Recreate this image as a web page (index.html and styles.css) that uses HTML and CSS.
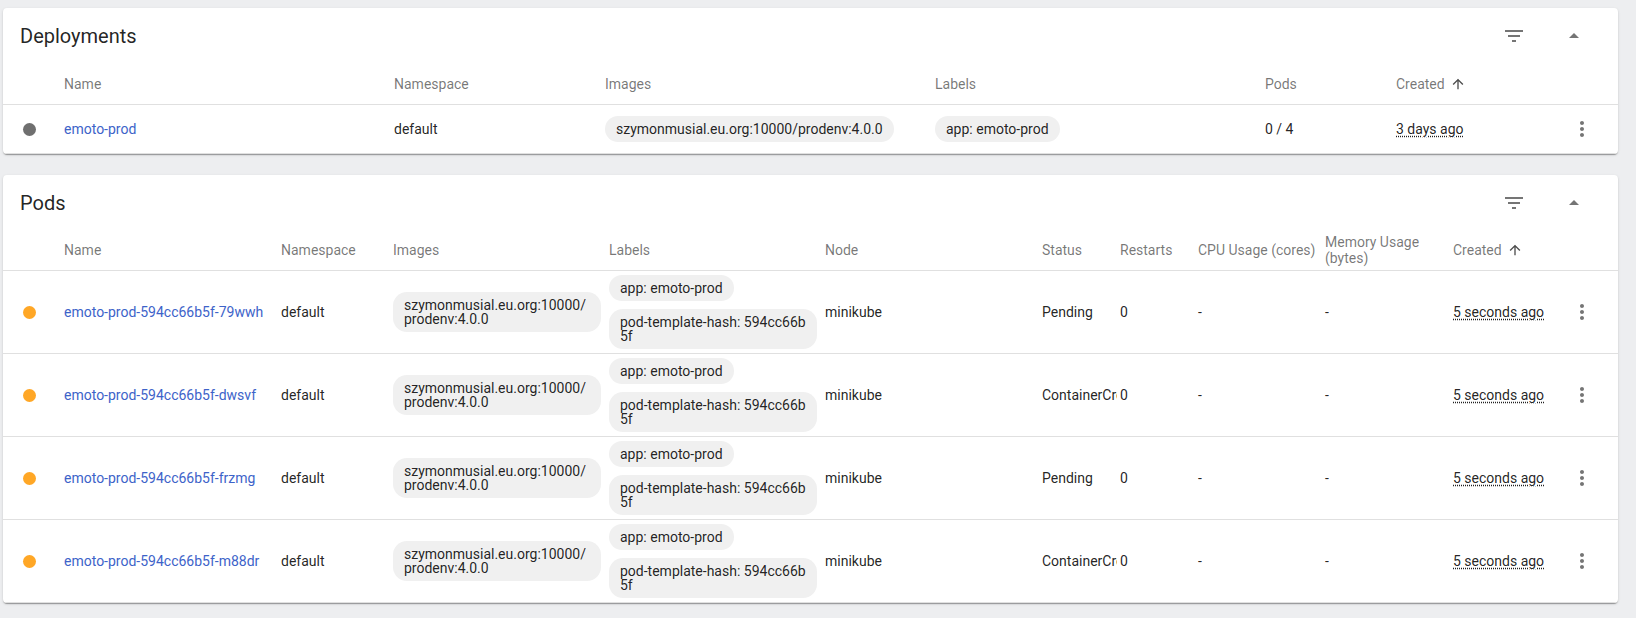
FILE: index.html
```html
<!DOCTYPE html>
<html lang="en">
<head>
<meta charset="utf-8">
<title>Workloads</title>
<link rel="stylesheet" href="styles.css">
</head>
<body>
<div class="page">

  <section class="card">
    <header class="card-header">
      <h2 class="card-title">Deployments</h2>
      <button class="icon-btn" aria-label="Filter"><svg viewBox="0 0 24 24" width="24" height="24"><path d="M10 18h4v-2h-4v2zM3 6v2h18V6H3zm3 7h12v-2H6v2z"/></svg></button>
      <button class="icon-btn" aria-label="Collapse"><svg viewBox="0 0 24 24" width="24" height="24"><path d="M7 14l5-5 5 5z"/></svg></button>
    </header>
    <table class="grid">
      <colgroup>
        <col class="c-dot"><col class="d-name"><col class="d-ns"><col class="d-img"><col class="d-lbl"><col class="d-pods"><col class="d-created"><col class="c-act">
      </colgroup>
      <thead>
        <tr><th></th><th>Name</th><th>Namespace</th><th>Images</th><th>Labels</th><th>Pods</th><th><span class="sorted">Created<svg viewBox="0 0 24 24" width="16" height="16"><path d="M4 12l1.41 1.41L11 7.83V20h2V7.83l5.58 5.59L20 12l-8-8-8 8z"/></svg></span></th><th></th></tr>
      </thead>
      <tbody>
        <tr class="row-single">
          <td class="dot-cell"><span class="dot dot-grey"></span></td>
          <td><a class="link" href="#">emoto-prod</a></td>
          <td>default</td>
          <td><span class="chip">szymonmusial.eu.org:10000/prodenv:4.0.0</span></td>
          <td><span class="chip">app: emoto-prod</span></td>
          <td>0 / 4</td>
          <td><span class="age">3 days ago</span></td>
          <td class="act"><svg class="kebab" viewBox="0 0 24 24" width="24" height="24"><path d="M12 8c1.1 0 2-.9 2-2s-.9-2-2-2-2 .9-2 2 .9 2 2 2zm0 2c-1.1 0-2 .9-2 2s.9 2 2 2 2-.9 2-2-.9-2-2-2zm0 6c-1.1 0-2 .9-2 2s.9 2 2 2 2-.9 2-2-.9-2-2-2z"/></svg></td>
        </tr>
      </tbody>
    </table>
  </section>

  <section class="card">
    <header class="card-header">
      <h2 class="card-title">Pods</h2>
      <button class="icon-btn" aria-label="Filter"><svg viewBox="0 0 24 24" width="24" height="24"><path d="M10 18h4v-2h-4v2zM3 6v2h18V6H3zm3 7h12v-2H6v2z"/></svg></button>
      <button class="icon-btn" aria-label="Collapse"><svg viewBox="0 0 24 24" width="24" height="24"><path d="M7 14l5-5 5 5z"/></svg></button>
    </header>
    <table class="grid">
      <colgroup>
        <col class="c-dot"><col class="p-name"><col class="p-ns"><col class="p-img"><col class="p-lbl"><col class="p-node"><col class="p-status"><col class="p-restarts"><col class="p-cpu"><col class="p-mem"><col class="p-created"><col class="c-act">
      </colgroup>
      <thead>
        <tr><th></th><th>Name</th><th>Namespace</th><th>Images</th><th>Labels</th><th>Node</th><th>Status</th><th>Restarts</th><th>CPU Usage (cores)</th><th class="wrap">Memory Usage (bytes)</th><th><span class="sorted">Created<svg viewBox="0 0 24 24" width="16" height="16"><path d="M4 12l1.41 1.41L11 7.83V20h2V7.83l5.58 5.59L20 12l-8-8-8 8z"/></svg></span></th><th></th></tr>
      </thead>
      <tbody>
        <tr>
          <td class="dot-cell"><span class="dot dot-orange"></span></td>
          <td><a class="link" href="#">emoto-prod-594cc66b5f-79wwh</a></td>
          <td>default</td>
          <td><span class="chip">szymonmusial.eu.org:10000/prodenv:4.0.0</span></td>
          <td class="labels"><div class="chip-list"><span class="chip">app: emoto-prod</span><span class="chip chip-break">pod-template-hash: 594cc66b5f</span></div></td>
          <td>minikube</td>
          <td class="clip"><span class="clip-text">Pending</span></td>
          <td>0</td>
          <td>-</td>
          <td>-</td>
          <td class="nowrap"><span class="age">5 seconds ago</span></td>
          <td class="act"><svg class="kebab" viewBox="0 0 24 24" width="24" height="24"><path d="M12 8c1.1 0 2-.9 2-2s-.9-2-2-2-2 .9-2 2 .9 2 2 2zm0 2c-1.1 0-2 .9-2 2s.9 2 2 2 2-.9 2-2-.9-2-2-2zm0 6c-1.1 0-2 .9-2 2s.9 2 2 2 2-.9 2-2-.9-2-2-2z"/></svg></td>
        </tr>
        <tr>
          <td class="dot-cell"><span class="dot dot-orange"></span></td>
          <td><a class="link" href="#">emoto-prod-594cc66b5f-dwsvf</a></td>
          <td>default</td>
          <td><span class="chip">szymonmusial.eu.org:10000/prodenv:4.0.0</span></td>
          <td class="labels"><div class="chip-list"><span class="chip">app: emoto-prod</span><span class="chip chip-break">pod-template-hash: 594cc66b5f</span></div></td>
          <td>minikube</td>
          <td class="clip"><span class="clip-text">ContainerCreating</span></td>
          <td>0</td>
          <td>-</td>
          <td>-</td>
          <td class="nowrap"><span class="age">5 seconds ago</span></td>
          <td class="act"><svg class="kebab" viewBox="0 0 24 24" width="24" height="24"><path d="M12 8c1.1 0 2-.9 2-2s-.9-2-2-2-2 .9-2 2 .9 2 2 2zm0 2c-1.1 0-2 .9-2 2s.9 2 2 2 2-.9 2-2-.9-2-2-2zm0 6c-1.1 0-2 .9-2 2s.9 2 2 2 2-.9 2-2-.9-2-2-2z"/></svg></td>
        </tr>
        <tr>
          <td class="dot-cell"><span class="dot dot-orange"></span></td>
          <td><a class="link" href="#">emoto-prod-594cc66b5f-frzmg</a></td>
          <td>default</td>
          <td><span class="chip">szymonmusial.eu.org:10000/prodenv:4.0.0</span></td>
          <td class="labels"><div class="chip-list"><span class="chip">app: emoto-prod</span><span class="chip chip-break">pod-template-hash: 594cc66b5f</span></div></td>
          <td>minikube</td>
          <td class="clip"><span class="clip-text">Pending</span></td>
          <td>0</td>
          <td>-</td>
          <td>-</td>
          <td class="nowrap"><span class="age">5 seconds ago</span></td>
          <td class="act"><svg class="kebab" viewBox="0 0 24 24" width="24" height="24"><path d="M12 8c1.1 0 2-.9 2-2s-.9-2-2-2-2 .9-2 2 .9 2 2 2zm0 2c-1.1 0-2 .9-2 2s.9 2 2 2 2-.9 2-2-.9-2-2-2zm0 6c-1.1 0-2 .9-2 2s.9 2 2 2 2-.9 2-2-.9-2-2-2z"/></svg></td>
        </tr>
        <tr>
          <td class="dot-cell"><span class="dot dot-orange"></span></td>
          <td><a class="link" href="#">emoto-prod-594cc66b5f-m88dr</a></td>
          <td>default</td>
          <td><span class="chip">szymonmusial.eu.org:10000/prodenv:4.0.0</span></td>
          <td class="labels"><div class="chip-list"><span class="chip">app: emoto-prod</span><span class="chip chip-break">pod-template-hash: 594cc66b5f</span></div></td>
          <td>minikube</td>
          <td class="clip"><span class="clip-text">ContainerCreating</span></td>
          <td>0</td>
          <td>-</td>
          <td>-</td>
          <td class="nowrap"><span class="age">5 seconds ago</span></td>
          <td class="act"><svg class="kebab" viewBox="0 0 24 24" width="24" height="24"><path d="M12 8c1.1 0 2-.9 2-2s-.9-2-2-2-2 .9-2 2 .9 2 2 2zm0 2c-1.1 0-2 .9-2 2s.9 2 2 2 2-.9 2-2-.9-2-2-2zm0 6c-1.1 0-2 .9-2 2s.9 2 2 2 2-.9 2-2-.9-2-2-2z"/></svg></td>
        </tr>
      </tbody>
    </table>
  </section>

</div>
</body>
</html>
```

FILE: styles.css
```css
* { box-sizing: border-box; }

html, body {
  margin: 0;
  padding: 0;
  background: #edeef0;
  font-family: Roboto, "Liberation Sans", sans-serif;
  color: rgba(0, 0, 0, 0.87);
}

.page {
  display: flex;
  flex-direction: column;
  gap: 21px;
  padding: 8px 18px 15px 3px;
}

.card {
  background: #fff;
  border-radius: 4px;
  box-shadow: 0 2px 1px -1px rgba(0,0,0,.2), 0 1px 1px 0 rgba(0,0,0,.14), 0 1px 3px 0 rgba(0,0,0,.12);
  overflow: hidden;
}

.card-header {
  display: flex;
  align-items: center;
  height: 56px;
  padding: 0 24px 0 17px;
  gap: 20px;
}

.card-title {
  flex: 1;
  margin: 0;
  font-size: 20px;
  font-weight: 400;
  line-height: 24px;
  color: rgba(0, 0, 0, 0.87);
}

.icon-btn {
  width: 40px;
  height: 40px;
  border: 0;
  padding: 0;
  background: transparent;
  display: flex;
  align-items: center;
  justify-content: center;
  fill: rgba(0, 0, 0, 0.54);
}

.grid {
  width: 100%;
  table-layout: fixed;
  border-collapse: collapse;
  font-size: 14px;
}

.c-dot { width: 61px; }
.c-act { width: 72px; }

.d-name { width: 330px; }
.d-ns { width: 211px; }
.d-img { width: 330px; }
.d-lbl { width: 330px; }
.d-pods { width: 131px; }
.d-created { width: 150px; }

.p-name { width: 217px; }
.p-ns { width: 112px; }
.p-img { width: 216px; }
.p-lbl { width: 216px; }
.p-node { width: 217px; }
.p-status { width: 78px; }
.p-restarts { width: 78px; }
.p-cpu { width: 127px; }
.p-mem { width: 128px; }
.p-created { width: 93px; }

.grid th {
  height: 40px;
  padding: 0;
  text-align: left;
  font-weight: 400;
  font-size: 14px;
  line-height: 16px;
  color: rgba(0, 0, 0, 0.54);
  white-space: nowrap;
  border-bottom: 1px solid #e0e0e0;
  vertical-align: middle;
}

.grid th.wrap { white-space: normal; }

.sorted {
  display: inline-flex;
  align-items: center;
  gap: 5px;
}

.sorted svg { fill: rgba(0, 0, 0, 0.7); }

.grid td {
  height: 48px;
  padding: 0 8px 0 0;
  vertical-align: middle;
  line-height: 16px;
  border-bottom: 1px solid #e0e0e0;
}

.row-single td {
  height: 49px;
  padding-top: 1px;
}

.grid td.labels {
  padding-top: 4px;
  padding-bottom: 4px;
}

.chip-list {
  display: flex;
  flex-direction: column;
  align-items: flex-start;
  gap: 8px;
}

.grid td.clip { padding-right: 3px; }

.clip-text {
  display: block;
  white-space: nowrap;
  overflow: hidden;
  text-overflow: clip;
}

.grid td.nowrap {
  white-space: nowrap;
  padding-right: 0;
}

.grid td.dot-cell { padding-left: 20px; }

.dot {
  display: block;
  width: 13px;
  height: 13px;
  border-radius: 50%;
}

.dot-grey { background: #6f6f6f; }
.dot-orange { background: #ffa726; }

.link {
  color: #3d63c9;
  text-decoration: none;
}

.chip {
  display: inline-block;
  max-width: 100%;
  padding: 6px 11px;
  border-radius: 14px;
  background: #f0f0f0;
  line-height: 14px;
  font-size: 14px;
  color: rgba(0, 0, 0, 0.87);
  overflow-wrap: anywhere;
}

.chip-break { word-break: break-all; }

.age {
  text-decoration: underline dotted;
  text-underline-offset: 2px;
}

.grid td.act { text-align: center; padding-right: 0; }

.kebab {
  display: inline-block;
  vertical-align: middle;
  fill: rgba(0, 0, 0, 0.54);
}
```
